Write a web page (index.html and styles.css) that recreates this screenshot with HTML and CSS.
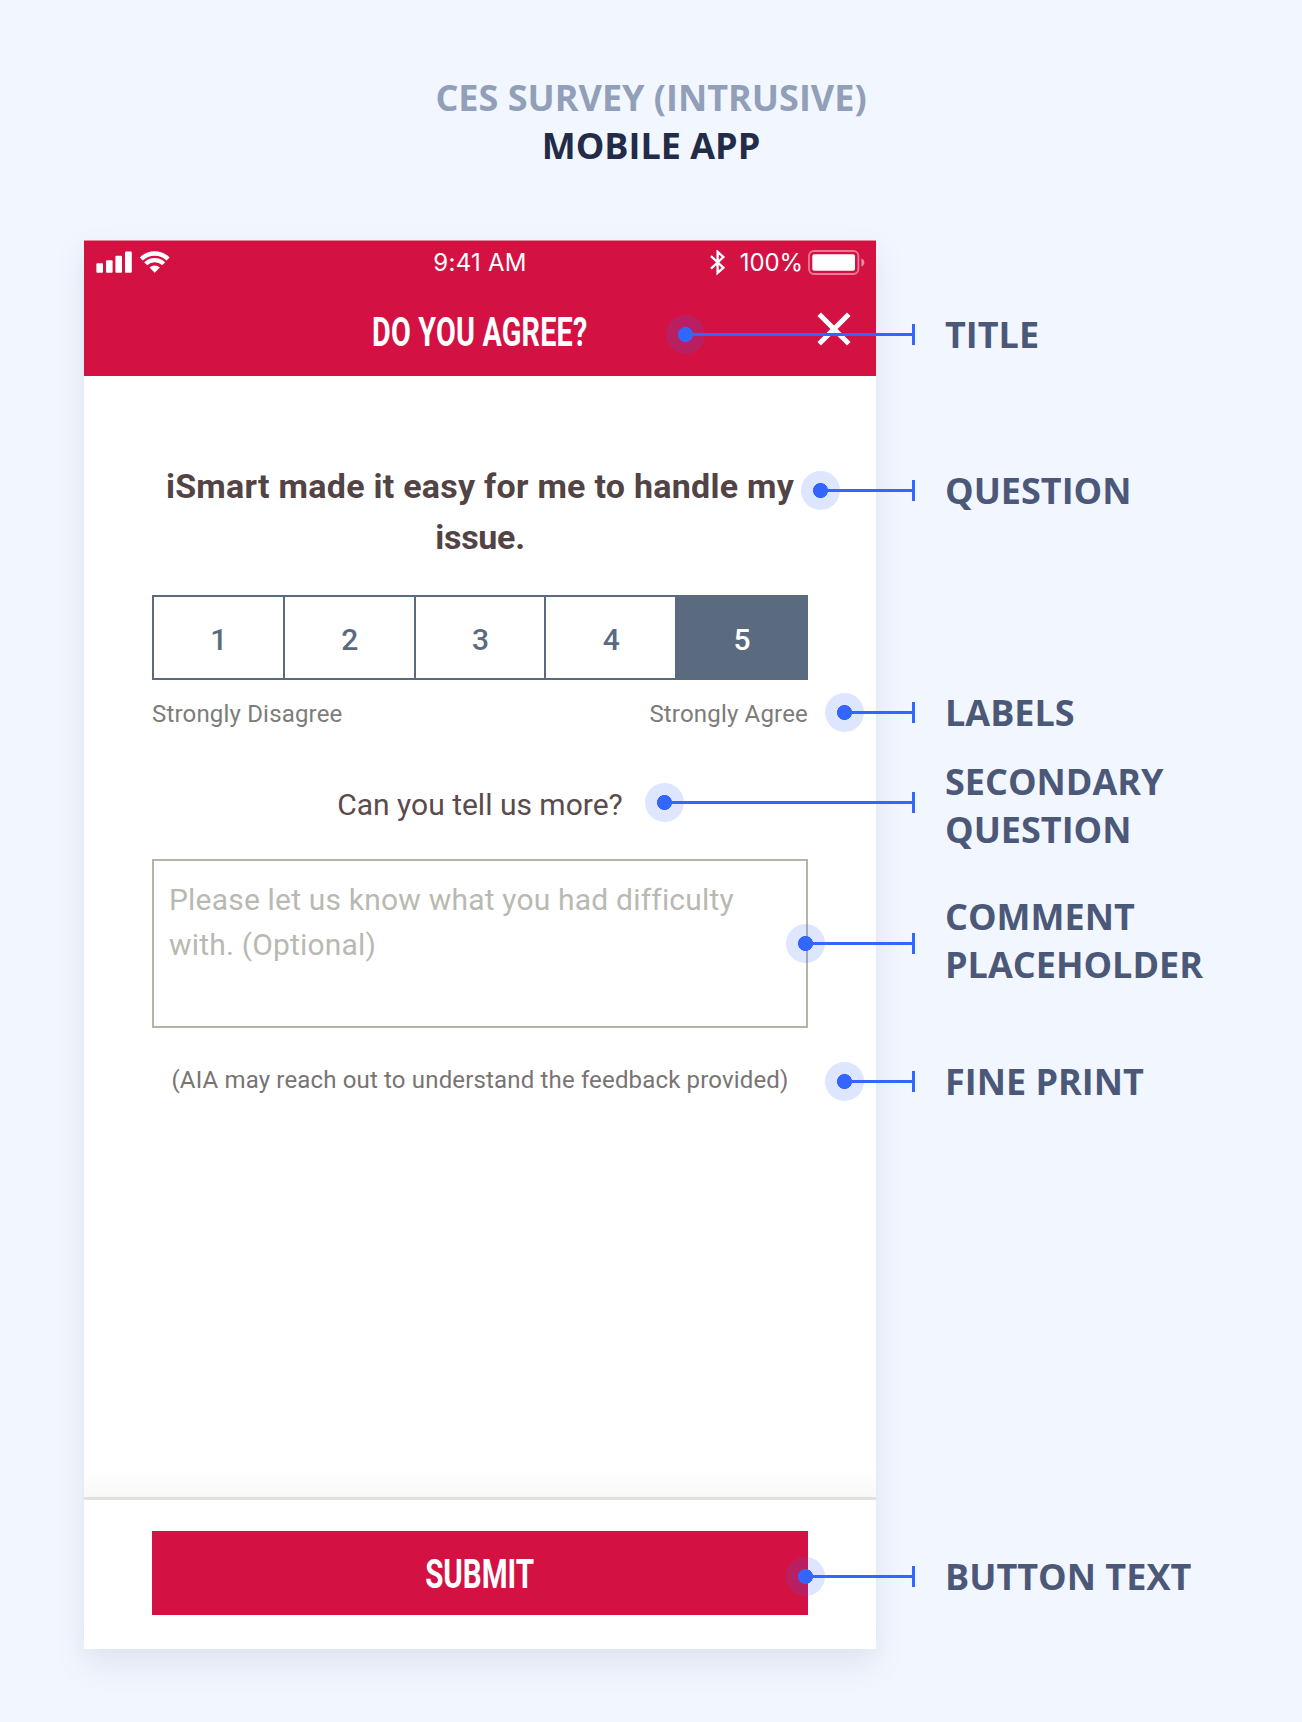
FILE: index.html
```html
<!DOCTYPE html>
<html lang="en">
<head>
<meta charset="utf-8">
<title>CES Survey – Mobile App</title>
<link rel="stylesheet" href="styles.css">
</head>
<body>
<header class="heading">
  <p class="heading-kicker">CES SURVEY (INTRUSIVE)</p>
  <h1 class="heading-title">MOBILE APP</h1>
</header>
<main class="board">
  <section class="phone">
    <div class="phone-header">
      <div class="status">
        <svg class="status-left" width="76" height="26" viewBox="0 0 76 26" fill="#fff">
          <rect x="0.4" y="13.2" width="6.6" height="9.5" rx="1"/>
          <rect x="10" y="10.2" width="6.6" height="12.5" rx="1"/>
          <rect x="19.4" y="5.8" width="6.6" height="16.9" rx="1"/>
          <rect x="29" y="1.5" width="6.8" height="21.2" rx="1"/>
          <path d="M58.7 22.8l-5.1-5.2a7.4 7.4 0 0 1 10.2 0z"/>
          <g fill="none" stroke="#fff" stroke-width="4.4"><path d="M45.3 9a19 19 0 0 1 26.8 0"/><path d="M49.7 13.8a12.8 12.8 0 0 1 18 0"/></g>
        </svg>
        <span class="status-time">9:41 AM</span>
        <div class="status-right">
          <svg width="16" height="26" viewBox="0 0 16 26" fill="none" stroke="#fff" stroke-width="2.3"><path d="M1 6.1l12.4 11.6L7.6 22.9V1.7l5.8 5.4L1 18.7"/></svg>
          <span class="status-percent">100%</span>
          <svg width="58" height="26" viewBox="0 0 58 26"><rect x="1" y="1" width="49.4" height="23" rx="5" fill="none" stroke="#fff" stroke-opacity=".45" stroke-width="1.8"/><rect x="4.3" y="4.3" width="42.7" height="16.4" rx="2" fill="#fff"/><path d="M53.4 8.4c4 1 4 7 0 8z" fill="#fff" fill-opacity=".5"/></svg>
        </div>
      </div>
      <div class="titlebar">
        <h2 class="titlebar-text">DO YOU AGREE?</h2>
        <svg class="close" width="34" height="34" viewBox="0 0 34 34" stroke="#fff" stroke-width="5"><path d="M2.2 2.2l29.6 29.6M31.8 2.2L2.2 31.8"/></svg>
      </div>
    </div>
    <div class="phone-body">
      <p class="question">iSmart made it easy for me to handle my<br><span class="question-end">issue.</span></p>
      <div class="rating">
        <span class="rating-cell">1</span><span class="rating-cell">2</span><span class="rating-cell">3</span><span class="rating-cell">4</span><span class="rating-cell rating-cell-selected">5</span>
      </div>
      <div class="scale"><span>Strongly Disagree</span><span>Strongly Agree</span></div>
      <p class="secondary">Can you tell us more?</p>
      <div class="comment">Please let us know what you had difficulty<br>with. (Optional)</div>
      <p class="fineprint">(AIA may reach out to understand the feedback provided)</p>
    </div>
    <div class="phone-footer">
      <div class="submit"><span class="submit-text">SUBMIT</span></div>
    </div>
  </section>
  <aside class="notes">
    <div class="note note-title"><i class="pin"></i>TITLE</div>
    <div class="note note-question"><i class="pin"></i>QUESTION</div>
    <div class="note note-labels"><i class="pin"></i>LABELS</div>
    <div class="note note-secondary"><i class="pin"></i>SECONDARY<br>QUESTION</div>
    <div class="note note-comment"><i class="pin"></i>COMMENT<br>PLACEHOLDER</div>
    <div class="note note-fineprint"><i class="pin"></i>FINE PRINT</div>
    <div class="note note-button"><i class="pin"></i>BUTTON TEXT</div>
  </aside>
</main>
</body>
</html>
```
FILE: styles.css
```css
* { box-sizing: border-box; }
body {
  margin: 0;
  width: 1302px;
  height: 1722px;
  overflow: hidden;
  background: #f2f6ff;
  font-family: Roboto, sans-serif;
}
p, h1, h2 { margin: 0; font-weight: inherit; }

.heading {
  height: 240px;
  padding-top: 74px;
  text-align: center;
  font: 700 36px/48px "Open Sans", sans-serif;
}
.heading-kicker { color: #919fb9; }
.heading-title { font-size: 36px; color: #222b47; }

.board { display: flex; padding-left: 84px; }

.phone {
  display: flex;
  flex-direction: column;
  width: 792px;
  height: 1409px;
  background: #fff;
  box-shadow: 0 14px 30px rgba(40, 60, 80, .1);
}
.phone-header {
  height: 136px;
  border-top: 1px solid #e5869f;
  background: #d31143;
  color: #fff;
}
.status {
  display: grid;
  grid-template-columns: 1fr auto 1fr;
  align-items: center;
  height: 44px;
  padding: 0 10px 0 12px;
  font: 400 24px/44px Inter, sans-serif;
}
.status-time { padding-right: 2px; letter-spacing: .25px; }
.status-right { display: flex; align-items: center; justify-content: flex-end; }
.status-percent { margin: 0 5px 0 14px; letter-spacing: -.1px; }
.titlebar {
  display: grid;
  grid-template-columns: 1fr auto 1fr;
  align-items: center;
  height: 91px;
  padding: 0 25px;
}
.titlebar-text {
  grid-column: 2;
  padding-top: 2px;
  font-size: 40.5px;
  font-weight: 700;
  line-height: 48px;
  letter-spacing: .3px;
  transform: scaleX(.71);
}
.close { justify-self: end; margin-bottom: 4px; }

.phone-body {
  flex: 1;
  padding: 85px 68px 0;
  background: linear-gradient(#fff calc(100% - 28px), #f8f8f7);
}
.question {
  text-align: center;
  font-size: 34px;
  font-weight: 700;
  line-height: 51px;
  letter-spacing: .26px;
  color: #524344;
  white-space: nowrap;
}
.question-end { letter-spacing: -.3px; }
.rating {
  display: flex;
  height: 85px;
  margin-top: 32px;
  border: 2px solid #5b6b7f;
}
.rating-cell {
  flex: 1;
  padding-left: 1px;
  text-align: center;
  font-size: 30px;
  font-weight: 500;
  line-height: 85px;
  color: #5b6b7f;
}
.rating-cell + .rating-cell { border-left: 2px solid #5b6b7f; }
.rating-cell-selected { background: #5b6b7f; color: #fff; }
.scale {
  display: flex;
  justify-content: space-between;
  margin-top: 19px;
  font-size: 24px;
  line-height: 30px;
  letter-spacing: .18px;
  color: #7c7c7a;
}
.secondary {
  margin-top: 56px;
  text-align: center;
  font-size: 30px;
  line-height: 40px;
  color: #5a4b4c;
}
.comment {
  height: 169px;
  margin-top: 34px;
  padding: 16px 15px;
  border: 2px solid #b4b4a9;
  font-size: 30px;
  line-height: 45px;
  letter-spacing: .19px;
  color: #b9b9b3;
  white-space: nowrap;
}
.fineprint {
  margin-top: 37px;
  text-align: center;
  font-size: 24px;
  line-height: 30px;
  letter-spacing: .16px;
  color: #787473;
  white-space: nowrap;
}
.phone-footer {
  height: 152px;
  padding: 31px 68px 0;
  border-top: 3px solid #e0e0dd;
  background: #fff;
}
.submit {
  height: 84px;
  background: #d31143;
  color: #fff;
  text-align: center;
  font-size: 40.5px;
  font-weight: 700;
  line-height: 86px;
}
.submit-text { display: inline-block; transform: scaleX(.73); }

.notes {
  padding-left: 69px;
  font: 700 36px/48px "Open Sans", sans-serif;
  color: #4b5878;
  white-space: nowrap;
}
.note { position: relative; }
.note-title { margin-top: 71px; --reach: 229.5px; --mid: 23.5px; }
.note-question { margin-top: 108px; --reach: 94.5px; --mid: 23.5px; }
.note-labels { margin-top: 174px; --reach: 70.5px; --mid: 23.5px; }
.note-secondary { margin-top: 21px; --reach: 250.5px; --mid: 44.5px; }
.note-comment { margin-top: 39px; --reach: 109.5px; --mid: 50.5px; }
.note-fineprint { margin-top: 69px; --reach: 70.5px; --mid: 23.5px; }
.note-button { margin-top: 447px; --reach: 109.5px; --mid: 23.5px; }

/* Connector: halo and dot at the left end, crossbar at the right end */
.pin {
  position: absolute;
  right: calc(100% + 30px);
  left: calc(-30px - var(--reach));
  top: calc(var(--mid) - 1.5px);
  height: 3px;
  background: #3366ff;
}
.pin::before {
  content: "";
  position: absolute;
  left: -19.5px;
  top: -18px;
  width: 39px;
  height: 39px;
  border-radius: 50%;
  background: radial-gradient(circle, #3366ff 7.2px, rgba(51, 102, 255, .16) 7.8px);
}
.pin::after {
  content: "";
  position: absolute;
  right: 0;
  top: -9px;
  width: 3px;
  height: 21px;
  background: #3366ff;
}
```
